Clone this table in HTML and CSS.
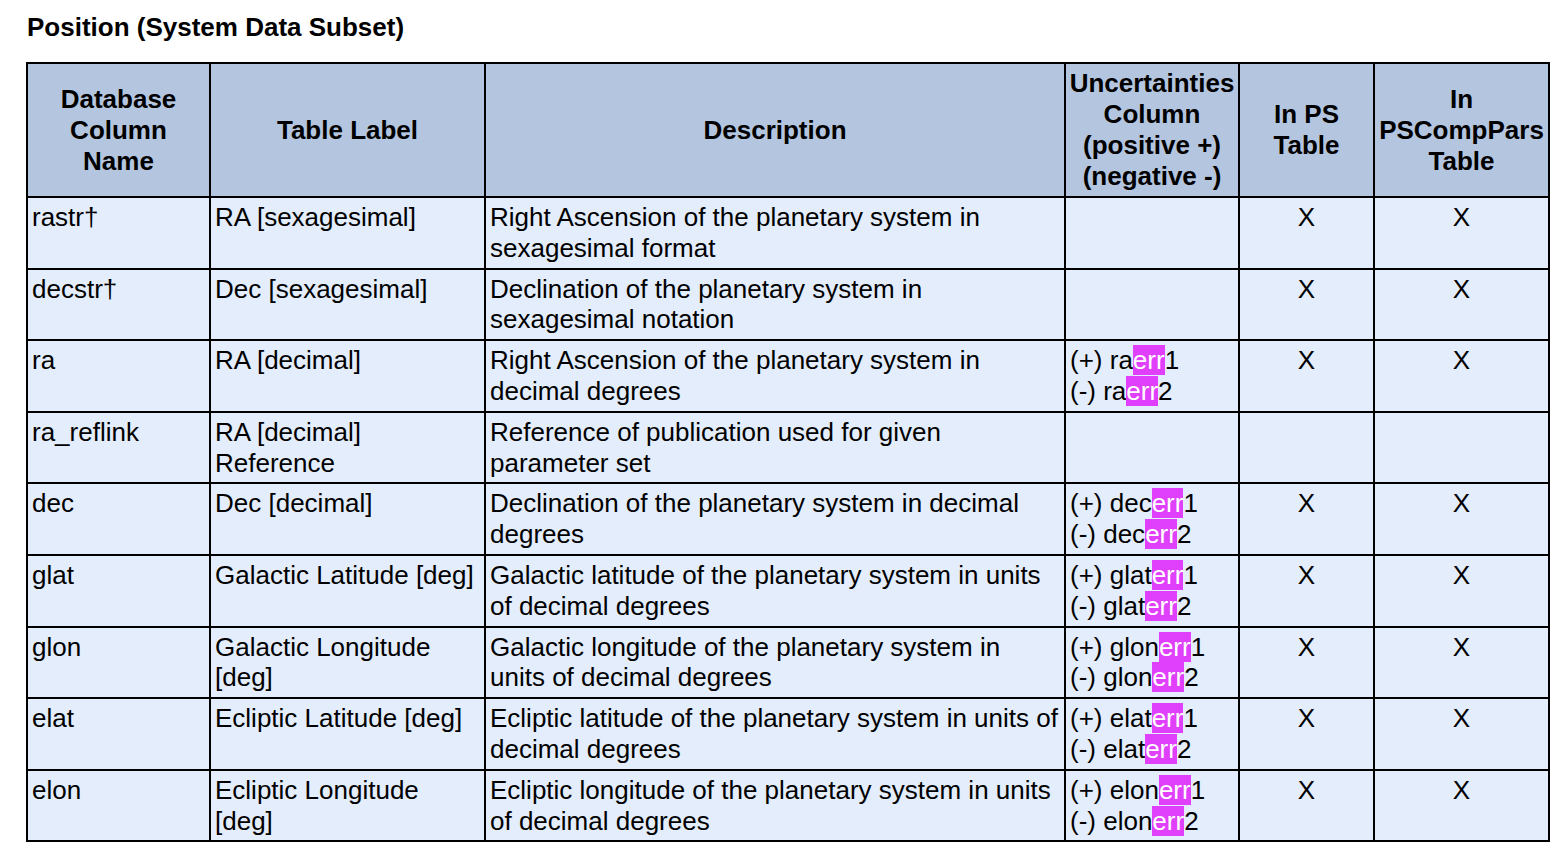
FILE: index.html
```html
<!DOCTYPE html>
<html>
<head>
<meta charset="utf-8">
<link rel="stylesheet" href="styles.css">
</head>
<body>
<h2 class="title">Position (System Data Subset)</h2>
<table class="data">
<colgroup>
<col class="c1"><col class="c2"><col class="c3"><col class="c4"><col class="c5"><col class="c6">
</colgroup>
<thead>
<tr>
<th class="wide-pad">Database Column Name</th>
<th>Table Label</th>
<th>Description</th>
<th>Uncertainties Column (positive +) (negative -)</th>
<th>In PS Table</th>
<th>In PSCompPars Table</th>
</tr>
</thead>
<tbody>
<tr><td>rastr†</td><td>RA [sexagesimal]</td><td>Right Ascension of the planetary system in sexagesimal format</td><td></td><td class="x">X</td><td class="x">X</td></tr>
<tr><td>decstr†</td><td>Dec [sexagesimal]</td><td>Declination of the planetary system in sexagesimal notation</td><td></td><td class="x">X</td><td class="x">X</td></tr>
<tr><td>ra</td><td>RA [decimal]</td><td>Right Ascension of the planetary system in decimal degrees</td><td>(+) ra<span class="hl">err</span>1<br>(-) ra<span class="hl">err</span>2</td><td class="x">X</td><td class="x">X</td></tr>
<tr><td>ra_reflink</td><td>RA [decimal] Reference</td><td>Reference of publication used for given parameter set</td><td></td><td class="x"></td><td class="x"></td></tr>
<tr><td>dec</td><td>Dec [decimal]</td><td>Declination of the planetary system in decimal degrees</td><td>(+) dec<span class="hl">err</span>1<br>(-) dec<span class="hl">err</span>2</td><td class="x">X</td><td class="x">X</td></tr>
<tr><td>glat</td><td>Galactic Latitude [deg]</td><td>Galactic latitude of the planetary system in units of decimal degrees</td><td>(+) glat<span class="hl">err</span>1<br>(-) glat<span class="hl">err</span>2</td><td class="x">X</td><td class="x">X</td></tr>
<tr><td>glon</td><td>Galactic Longitude [deg]</td><td>Galactic longitude of the planetary system in units of decimal degrees</td><td>(+) glon<span class="hl">err</span>1<br>(-) glon<span class="hl">err</span>2</td><td class="x">X</td><td class="x">X</td></tr>
<tr><td>elat</td><td>Ecliptic Latitude [deg]</td><td>Ecliptic latitude of the planetary system in units of decimal degrees</td><td>(+) elat<span class="hl">err</span>1<br>(-) elat<span class="hl">err</span>2</td><td class="x">X</td><td class="x">X</td></tr>
<tr><td>elon</td><td>Ecliptic Longitude [deg]</td><td>Ecliptic longitude of the planetary system in units of decimal degrees</td><td>(+) elon<span class="hl">err</span>1<br>(-) elon<span class="hl">err</span>2</td><td class="x">X</td><td class="x">X</td></tr>
</tbody>
</table>
</body>
</html>
```
FILE: styles.css
```css
html, body {
  margin: 0;
  padding: 0;
  background: #ffffff;
}
body {
  font-family: "Liberation Sans", Arial, sans-serif;
  font-size: 26px;
  line-height: 31px;
  color: #000;
  padding: 12px 0 0 26px;
}
.title {
  margin: 0 0 19px 1px;
  font-size: 26px;
  line-height: 31px;
  font-weight: bold;
}
.data {
  border-collapse: collapse;
  table-layout: fixed;
  width: 1524px;
}
.c1 { width: 183px; }
.c2 { width: 275px; }
.c3 { width: 580px; }
.c4 { width: 174px; }
.c5 { width: 135px; }
.c6 { width: 175px; }
.data th, .data td {
  border: 2px solid #000;
  padding: 4px;
  vertical-align: top;
  text-align: left;
  font-size: 26px;
  line-height: 30.8px;
}
.data th {
  background: #b4c6df;
  font-weight: bold;
  text-align: center;
  vertical-align: middle;
  line-height: 31px;
  padding: 4px 2px;
}
.data th.wide-pad {
  padding: 4px 6px;
}
.data td {
  background: #e3edfb;
}
.data td.x {
  text-align: center;
}
.hl {
  background: #e040fb;
  color: #fff;
}
```
